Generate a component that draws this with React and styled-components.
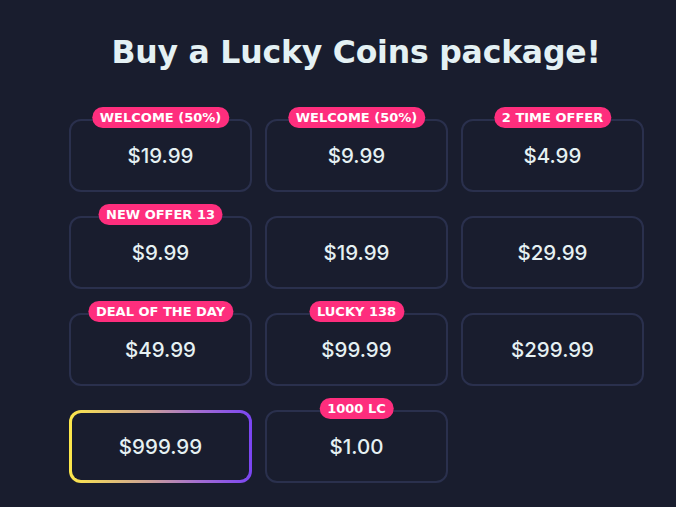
import React from "react";
import styled, { createGlobalStyle } from "styled-components";

const Global = createGlobalStyle`
  html, body { margin: 0; padding: 0; background: #191d2e; }
  body { font-family: "DejaVu Sans", "Noto Sans", sans-serif; }
`;

const Page = styled.div`
  width: 676px;
  height: 507px;
  background: #191d2e;
  box-sizing: border-box;
  padding: 30px 33px 0 69px;
  overflow: hidden;
`;

const Title = styled.h1`
  margin: 0 0 45px;
  text-align: center;
  color: #e4f1f4;
  font-family: "DejaVu Sans", sans-serif;
  font-weight: 700;
  font-size: 31.5px;
  line-height: 44px;
  letter-spacing: -0.2px;
`;

const Grid = styled.div`
  display: grid;
  grid-template-columns: repeat(3, 183px);
  column-gap: 13px;
  row-gap: 24px;
`;

const Card = styled.div`
  position: relative;
  height: 73px;
  box-sizing: border-box;
  border-radius: 12px;
  border: ${(p) => (p.$special ? "3px solid transparent" : "2px solid #2a304d")};
  background: ${(p) =>
    p.$special
      ? "linear-gradient(#191d2e, #191d2e) padding-box, linear-gradient(90deg, #fde84a 0%, #c99e9a 45%, #a46fd0 70%, #7a45f3 100%) border-box"
      : "#191d2e"};
  display: flex;
  align-items: center;
  justify-content: center;
`;

const Price = styled.span`
  color: #e6f1f3;
  font-family: "Inter", sans-serif;
  font-weight: 500;
  font-size: 20.5px;
  letter-spacing: 0px;
`;

const Badge = styled.span`
  position: absolute;
  top: -14px;
  left: 50%;
  transform: translateX(-50%);
  background: #fe2e7d;
  color: #ffffff;
  font-family: "DejaVu Sans", sans-serif;
  font-weight: 700;
  font-size: 13px;
  line-height: 21px;
  height: 21px;
  padding: 0 8px;
  border-radius: 11px;
  white-space: nowrap;
`;

const items = [
  { price: "$19.99", badge: "WELCOME (50%)" },
  { price: "$9.99", badge: "WELCOME (50%)" },
  { price: "$4.99", badge: "2 TIME OFFER" },
  { price: "$9.99", badge: "NEW OFFER 13" },
  { price: "$19.99" },
  { price: "$29.99" },
  { price: "$49.99", badge: "DEAL OF THE DAY" },
  { price: "$99.99", badge: "LUCKY 138" },
  { price: "$299.99" },
  { price: "$999.99", special: true },
  { price: "$1.00", badge: "1000 LC" },
];

export default function App() {
  return (
    <Page>
      <Global />
      <Title>Buy a Lucky Coins package!</Title>
      <Grid>
        {items.map((it, i) => (
          <Card key={i} $special={it.special}>
            {it.badge && <Badge>{it.badge}</Badge>}
            <Price>{it.price}</Price>
          </Card>
        ))}
      </Grid>
    </Page>
  );
}
